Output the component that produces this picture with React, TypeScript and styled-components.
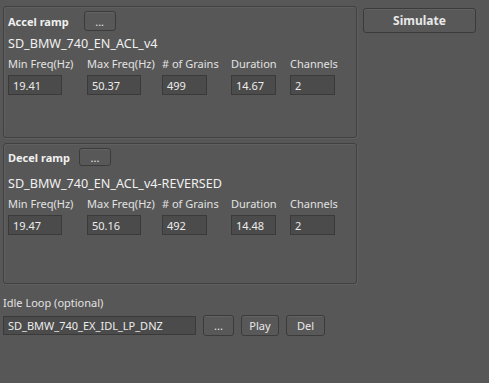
import React from "react";
import styled, { createGlobalStyle } from "styled-components";

const GlobalStyle = createGlobalStyle`
  html, body {
    margin: 0;
    padding: 0;
    background: #575757;
  }
  body {
    font-family: "Noto Sans", "DejaVu Sans", sans-serif;
    font-size: 11px;
    color: #e6e6e6;
  }
`;

const Window = styled.div`
  width: 489px;
  height: 383px;
  box-sizing: border-box;
  padding: 6px 0 0 3px;
  display: flex;
  flex-direction: column;
`;

const TopRow = styled.div`
  display: flex;
  align-items: flex-start;
  gap: 6px;
`;

const Column = styled.div`
  display: flex;
  flex-direction: column;
  gap: 5px;
`;

const Group = styled.div<{ $top: number; $h: number }>`
  width: 354px;
  height: ${(p) => p.$h}px;
  box-sizing: border-box;
  border: 1px solid #414141;
  border-radius: 3px;
  box-shadow: inset 1px 1px 0 #5f5f5f, 1px 1px 0 #5f5f5f;
  padding: ${(p) => p.$top}px 0 0 4px;
  display: flex;
  flex-direction: column;
`;

const TitleRow = styled.div<{ $gap: number }>`
  display: flex;
  align-items: center;
  gap: ${(p) => p.$gap}px;
`;

const Title = styled.span`
  font-weight: 700;
  font-size: 11px;
  color: #f0f0f0;
`;

const Button = styled.button<{ $w: number; $h?: number }>`
  box-sizing: border-box;
  width: ${(p) => p.$w}px;
  height: ${(p) => p.$h ?? 20}px;
  padding: 0;
  background: #585858;
  border: 1px solid #3b3b3b;
  border-radius: 3px;
  box-shadow: inset 0 1px 0 #626262;
  color: #e8e8e8;
  font-family: "Noto Sans", "DejaVu Sans", sans-serif;
  font-size: 11px;
`;

const SimulateButton = styled(Button)`
  margin-top: 2px;
  font-weight: 700;
  font-size: 12px;
`;

const FileName = styled.div<{ $mt: number }>`
  margin-top: ${(p) => p.$mt}px;
  font-size: 12.6px;
  line-height: 16px;
  color: #f0f0f0;
`;

const Fields = styled.div`
  margin-top: 5px;
  display: grid;
  grid-template-columns: 79px 75px 69px 59px 60px;
  row-gap: 4px;
`;

const Label = styled.span`
  line-height: 14px;
  color: #e2e2e2;
  white-space: nowrap;
`;

const Field = styled.div<{ $w: number }>`
  box-sizing: border-box;
  width: ${(p) => p.$w}px;
  height: 20px;
  background: #4b4b4b;
  border: 1px solid #3a3a3a;
  padding: 0 4px;
  display: flex;
  align-items: center;
  color: #ececec;
  font-size: 11px;
`;

const IdleSection = styled.div`
  margin-top: 12px;
  display: flex;
  flex-direction: column;
  gap: 5px;
`;

const IdleRow = styled.div`
  display: flex;
  align-items: center;
  gap: 7px;
`;

const IdleField = styled(Field)`
  height: 19px;
`;

type Ramp = {
  title: string;
  file: string;
  values: string[];
  height: number;
  btnGap: number;
  btnH: number;
  fileMt: number;
};

const labels = ["Min Freq(Hz)", "Max Freq(Hz)", "# of Grains", "Duration", "Channels"];
const widths = [54, 54, 45, 45, 45];

const RampGroup = ({ ramp }: { ramp: Ramp }) => (
  <Group $top={4} $h={ramp.height}>
    <TitleRow $gap={ramp.btnGap}>
      <Title>{ramp.title}</Title>
      <Button $w={32} $h={ramp.btnH}>...</Button>
    </TitleRow>
    <FileName $mt={ramp.fileMt}>{ramp.file}</FileName>
    <Fields>
      {labels.map((l) => (
        <Label key={l}>{l}</Label>
      ))}
      {ramp.values.map((v, i) => (
        <Field key={i} $w={widths[i]}>
          {v}
        </Field>
      ))}
    </Fields>
  </Group>
);

const ramps: Ramp[] = [
  {
    title: "Accel ramp",
    file: "SD_BMW_740_EN_ACL_v4",
    values: ["19.41", "50.37", "499", "14.67", "2"],
    height: 132,
    btnGap: 15,
    btnH: 20,
    fileMt: 5,
  },
  {
    title: "Decel ramp",
    file: "SD_BMW_740_EN_ACL_v4-REVERSED",
    values: ["19.47", "50.16", "492", "14.48", "2"],
    height: 141,
    btnGap: 9,
    btnH: 18,
    fileMt: 10,
  },
];

export default function App() {
  return (
    <>
      <GlobalStyle />
      <Window>
        <TopRow>
          <Column>
            {ramps.map((r) => (
              <RampGroup key={r.title} ramp={r} />
            ))}
          </Column>
          <SimulateButton $w={113} $h={25}>
            Simulate
          </SimulateButton>
        </TopRow>
        <IdleSection>
          <Label>Idle Loop (optional)</Label>
          <IdleRow>
            <IdleField $w={193}>SD_BMW_740_EX_IDL_LP_DNZ</IdleField>
            <Button $w={31} $h={21}>...</Button>
            <Button $w={38} $h={21}>Play</Button>
            <Button $w={39} $h={21}>Del</Button>
          </IdleRow>
        </IdleSection>
      </Window>
    </>
  );
}
